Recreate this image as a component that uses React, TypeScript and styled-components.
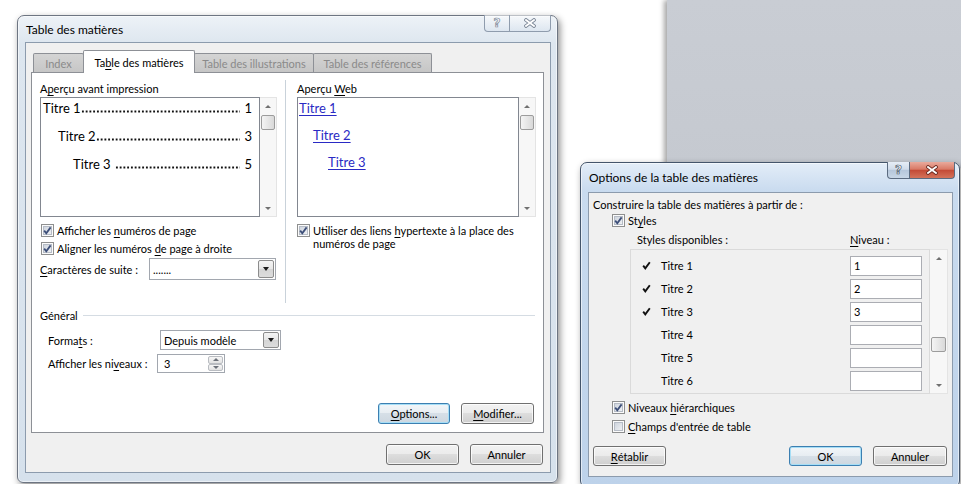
import React from "react";
import styled, { createGlobalStyle } from "styled-components";

const GlobalStyle = createGlobalStyle`
  html, body {
    margin: 0;
    padding: 0;
    overflow: hidden;
    background: #ffffff;
  }
  body {
    font-family: "Lato", "Liberation Sans", sans-serif;
    font-size: 11px;
    color: #000;
  }
  u {
    text-decoration-thickness: 1px;
    text-underline-offset: 2px;
  }
`;

const Desktop = styled.div`
  position: relative;
  width: 961px;
  height: 484px;
  overflow: hidden;
  background: #fff;
`;

// the window lying behind the dialogs, top right
const Backdrop = styled.div`
  position: absolute;
  left: 667px;
  top: 0;
  width: 300px;
  height: 168px;
  background: linear-gradient(180deg, #c9cdd4 0%, #c5c9d0 100%);
  box-shadow: -3px 0 5px rgba(0, 0, 0, 0.35);
`;

const Window = styled.div<{ $x: number; $y: number; $w: number; $h: number; $active?: boolean }>`
  position: absolute;
  left: ${(p) => p.$x}px;
  top: ${(p) => p.$y}px;
  width: ${(p) => p.$w}px;
  height: ${(p) => p.$h}px;
  box-sizing: border-box;
  display: flex;
  flex-direction: column;
  padding: 0 6px 9px 7px;
  border: 1px solid ${(p) => (p.$active ? "#44556b" : "#6d7582")};
  border-radius: 7px 7px 6px 6px;
  background: ${(p) =>
    p.$active
      ? "linear-gradient(180deg, #e3edf8 0px, #c9dbef 28px, #bdd2ea 100%)"
      : "linear-gradient(180deg, #edf2f7 0px, #dde6ef 28px, #d6e1ec 100%)"};
  box-shadow: inset 0 0 0 1px rgba(255, 255, 255, 0.55), 2px 3px 7px rgba(0, 0, 0, 0.45);
`;

const TitleBar = styled.div<{ $h: number }>`
  position: relative;
  height: ${(p) => p.$h}px;
  display: flex;
  align-items: center;
  padding-left: 1px;
  font-size: 12px;
  white-space: nowrap;
`;

const Captions = styled.div<{ $right: number }>`
  position: absolute;
  top: -1px;
  right: ${(p) => p.$right}px;
  display: flex;
  height: 17px;
`;

const CaptionButton = styled.div<{ $w: number; $close?: boolean; $active?: boolean }>`
  width: ${(p) => p.$w}px;
  height: 100%;
  box-sizing: border-box;
  display: flex;
  align-items: center;
  justify-content: center;
  border: 1px solid ${(p) => (p.$active ? "#5b6b80" : "#8f9cad")};
  border-top: none;
  border-left: ${(p) => (p.$close ? "none" : undefined)};
  border-radius: ${(p) => (p.$close ? "0 0 4px 0" : "0 0 0 4px")};
  background: ${(p) =>
    !p.$active
      ? "linear-gradient(180deg, rgba(255,255,255,0.55), rgba(214,225,237,0.5))"
      : p.$close
      ? "linear-gradient(180deg, #e9aa9c 0%, #d97a66 45%, #c44b37 52%, #d4735a 100%)"
      : "linear-gradient(180deg, #e6edf6 0%, #d1dcea 45%, #b6c7db 52%, #c8d7e7 100%)"};
`;

const HelpGlyph = styled.span<{ $active?: boolean }>`
  font-family: "DejaVu Sans", sans-serif;
  font-weight: bold;
  font-size: 12px;
  line-height: 1;
  color: #f6f8fb;
  -webkit-text-stroke: 0.7px ${(p) => (p.$active ? "#4c5868" : "#7d8898")};
`;

const CloseGlyph = ({ active }: { active?: boolean }) => (
  <svg width="12" height="10" viewBox="0 0 12 10">
    <path d="M2 2 L10 8 M10 2 L2 8" stroke={active ? "#6b2a20" : "#7d8898"} strokeWidth="3.6" strokeLinecap="square" fill="none" />
    <path d="M2 2 L10 8 M10 2 L2 8" stroke="#ffffff" strokeWidth="1.8" strokeLinecap="square" fill="none" />
  </svg>
);

const Client = styled.div`
  flex: 1;
  min-height: 0;
  display: flex;
  flex-direction: column;
  background: #f0f0f0;
  border: 1px solid #8c9bad;
`;

/* ---------- tabs ---------- */

const TabArea = styled.div`
  display: flex;
  flex-direction: column;
  padding: 7px 6px 0 5px;
`;

const TabStrip = styled.div`
  position: relative;
  z-index: 1;
  display: flex;
  align-items: flex-end;
  height: 22px;
  padding-left: 2px;
`;

const Tab = styled.div<{ $w: number; $selected?: boolean }>`
  width: ${(p) => p.$w}px;
  height: ${(p) => (p.$selected ? 23 : 19)}px;
  margin-bottom: ${(p) => (p.$selected ? -1 : 0)}px;
  margin-left: -1px;
  box-sizing: border-box;
  border: 1px solid #8d9096;
  border-bottom: none;
  border-radius: 2px 2px 0 0;
  background: ${(p) => (p.$selected ? "#ffffff" : "linear-gradient(180deg, #d4d4d4, #c6c6c6)")};
  color: ${(p) => (p.$selected ? "#000" : "#8a8a8a")};
  display: flex;
  align-items: center;
  justify-content: center;
  white-space: nowrap;

  &:first-child {
    margin-left: 0;
  }
`;

const Panel = styled.div`
  height: 361px;
  box-sizing: border-box;
  display: flex;
  flex-direction: column;
  border: 1px solid #8d9096;
  background: #ffffff;
`;

const PreviewSection = styled.div`
  display: flex;
  height: 230px;
  box-sizing: border-box;
  padding: 8px 0 0 8px;
`;

const Column = styled.div<{ $w: number }>`
  width: ${(p) => p.$w}px;
  display: flex;
  flex-direction: column;
`;

const Divider = styled.div`
  width: 1px;
  margin: -1px 11px 0 8px;
  background: #c9d2da;
`;

const FieldLabel = styled.div`
  height: 15px;
  line-height: 15px;
  white-space: nowrap;
`;

const PreviewFrame = styled.div`
  display: flex;
  height: 120px;
  margin-top: 1px;
`;

const PreviewBox = styled.div<{ $gap: number }>`
  flex: 1;
  min-width: 0;
  box-sizing: border-box;
  display: flex;
  flex-direction: column;
  gap: ${(p) => p.$gap}px;
  padding: 1px 7px 0 0;
  border: 1px solid #828790;
  background: #fff;
  overflow: hidden;
`;

const TocLine = styled.div<{ $indent: number }>`
  display: flex;
  align-items: center;
  height: 18px;
  padding-left: ${(p) => p.$indent}px;
  font-size: 13px;
  white-space: nowrap;
`;

// dotted leader between a title and its page number
const Leader = styled.span<{ $space?: boolean }>`
  flex: 1;
  align-self: flex-end;
  height: 3px;
  margin: 0 0 4px ${(p) => (p.$space ? 4 : 0)}px;
  background-image: radial-gradient(circle at center, #111 0.9px, transparent 1.3px);
  background-size: 3.75px 3px;
  background-repeat: repeat-x;
`;

const PageNum = styled.span`
  padding-left: 4px;
`;

const WebLink = styled.a<{ $indent: number }>`
  display: block;
  height: 18px;
  line-height: 18px;
  margin-left: ${(p) => p.$indent}px;
  font-size: 13px;
  color: #2a2ac4;
  text-decoration: underline;
  text-underline-offset: 2px;
  white-space: nowrap;
  align-self: flex-start;
`;

/* ---------- scroll bars ---------- */

const ScrollTrack = styled.div<{ $w: number }>`
  width: ${(p) => p.$w}px;
  box-sizing: border-box;
  display: flex;
  flex-direction: column;
  border: 1px solid #e4e4e4;
  border-left: none;
  background: #f7f7f7;
`;

const ScrollArrow = styled.span<{ $down?: boolean }>`
  height: 16px;
  display: flex;
  align-items: center;
  justify-content: center;

  &::after {
    content: "";
    border-left: 3px solid transparent;
    border-right: 3px solid transparent;
    ${(p) => (p.$down ? "border-top: 3px solid #707070;" : "border-bottom: 3px solid #707070;")}
  }
`;

const ScrollThumb = styled.span<{ $top: number }>`
  height: 15px;
  margin: ${(p) => p.$top}px 1px 0;
  box-sizing: border-box;
  border: 1px solid #9c9c9c;
  border-radius: 2px;
  background: linear-gradient(90deg, #f4f4f4, #d9d9d9);
`;

const ScrollSpace = styled.span`
  flex: 1;
`;

const ScrollBar = ({ w, thumbTop }: { w: number; thumbTop: number }) => (
  <ScrollTrack $w={w}>
    <ScrollArrow />
    <ScrollThumb $top={thumbTop} />
    <ScrollSpace />
    <ScrollArrow $down />
  </ScrollTrack>
);

/* ---------- checkboxes ---------- */

const CheckRow = styled.div<{ $h?: number; $indent?: number; $top?: boolean; $mt?: number }>`
  display: flex;
  align-items: ${(p) => (p.$top ? "flex-start" : "center")};
  gap: 3px;
  height: ${(p) => (p.$h ? `${p.$h}px` : "auto")};
  margin-top: ${(p) => p.$mt ?? 0}px;
  padding-left: ${(p) => p.$indent ?? 1}px;
  white-space: nowrap;
`;

const BoxOuter = styled.span`
  flex: none;
  width: 13px;
  height: 13px;
  box-sizing: border-box;
  display: flex;
  align-items: center;
  justify-content: center;
  border: 1px solid #8e8f8f;
  background: #fbfbfb;
`;

const BoxInner = styled.span`
  position: relative;
  width: 9px;
  height: 9px;
  box-sizing: border-box;
  border: 1px solid #b6bcc6;
  background: linear-gradient(135deg, #cfd5de 0%, #eef0f3 100%);

  svg {
    position: absolute;
    left: -2px;
    top: -2px;
  }
`;

const CheckText = styled.span`
  line-height: 13px;
`;

const CheckBox = ({ checked }: { checked?: boolean }) => (
  <BoxOuter>
    <BoxInner>
      {checked && (
        <svg width="11" height="11" viewBox="0 0 11 11">
          <path d="M2.2 5.6 L4.3 8.2 L8.6 2.4" stroke="#3d4f79" strokeWidth="1.8" fill="none" />
        </svg>
      )}
    </BoxInner>
  </BoxOuter>
);

/* ---------- inputs ---------- */

const InlineField = styled.div`
  display: flex;
  align-items: center;
  margin-top: 1px;
`;

const InlineLabel = styled.span<{ $w: number }>`
  width: ${(p) => p.$w}px;
  white-space: nowrap;
`;

const Select = styled.div<{ $w: number; $h: number }>`
  width: ${(p) => p.$w}px;
  height: ${(p) => p.$h}px;
  box-sizing: border-box;
  display: flex;
  align-items: center;
  padding-left: 3px;
  border: 1px solid #a2a7af;
  background: #fff;
  white-space: nowrap;
`;

const SelectValue = styled.span`
  flex: 1;
`;

const DropButton = styled.span`
  align-self: stretch;
  width: 16px;
  margin: 1px;
  box-sizing: border-box;
  display: flex;
  align-items: center;
  justify-content: center;
  border: 1px solid #8c8c8c;
  border-radius: 2px;
  background: linear-gradient(180deg, #f4f4f4 0%, #e7e7e7 50%, #d5d5d5 51%, #dcdcdc 100%);

  &::after {
    content: "";
    border-left: 3.5px solid transparent;
    border-right: 3.5px solid transparent;
    border-top: 4px solid #1b1b1b;
  }
`;

const Spin = styled.div`
  width: 68px;
  height: 19px;
  margin-left: -3px;
  box-sizing: border-box;
  display: flex;
  align-items: center;
  padding-left: 6px;
  border: 1px solid #a2a7af;
  background: #fff;
`;

const SpinButtons = styled.span`
  align-self: stretch;
  width: 15px;
  margin: 1px;
  margin-left: auto;
  display: flex;
  flex-direction: column;
`;

const SpinHalf = styled.span<{ $down?: boolean }>`
  flex: 1;
  box-sizing: border-box;
  display: flex;
  align-items: center;
  justify-content: center;
  border: 1px solid #b9bcc1;
  border-radius: 2px;
  background: linear-gradient(180deg, #f6f6f6, #e2e2e2);

  &::after {
    content: "";
    border-left: 3px solid transparent;
    border-right: 3px solid transparent;
    ${(p) => (p.$down ? "border-top: 3px solid #6c717a;" : "border-bottom: 3px solid #6c717a;")}
  }
`;

/* ---------- général ---------- */

const GroupHeader = styled.div`
  display: flex;
  align-items: center;
  height: 15px;
  margin-top: 5px;
  padding: 0 8px;
  white-space: nowrap;
`;

const GroupRule = styled.span`
  flex: 1;
  height: 1px;
  margin-left: 5px;
  background: #d5dce3;
`;

const FormRow = styled.div<{ $mt: number }>`
  display: flex;
  align-items: center;
  margin-top: ${(p) => p.$mt}px;
  padding-left: 16px;
`;

/* ---------- buttons ---------- */

const ButtonRow = styled.div<{ $mt?: string; $pad: string }>`
  display: flex;
  justify-content: flex-end;
  gap: 11px;
  margin-top: ${(p) => p.$mt ?? "0"};
  padding: ${(p) => p.$pad};
`;

const Button = styled.div<{ $w: number; $h?: number; $default?: boolean; $push?: boolean }>`
  width: ${(p) => p.$w}px;
  height: ${(p) => p.$h ?? 21}px;
  box-sizing: border-box;
  display: flex;
  align-items: center;
  justify-content: center;
  margin-right: ${(p) => (p.$push ? "auto" : "0")};
  border: 1px solid ${(p) => (p.$default ? "#3c7fb1" : "#707070")};
  border-radius: 3px;
  background: ${(p) =>
    p.$default
      ? "linear-gradient(180deg, #f2f6f9 0%, #e7edf2 49%, #d6dfe7 50%, #cdd7e0 100%)"
      : "linear-gradient(180deg, #f2f2f2 0%, #ebebeb 49%, #dddddd 50%, #cfcfcf 100%)"};
  box-shadow: inset 0 0 0 1px ${(p) => (p.$default ? "#a6def6" : "rgba(255,255,255,0.75)")};
  white-space: nowrap;
`;

/* ---------- options dialog ---------- */

const OptionsBody = styled.div`
  display: flex;
  flex-direction: column;
  padding: 4px 5px 0 4px;
`;

const Heading = styled.div<{ $indent?: number; $mt?: number }>`
  display: flex;
  height: 15px;
  line-height: 15px;
  margin-top: ${(p) => p.$mt ?? 0}px;
  padding-left: ${(p) => p.$indent ?? 0}px;
  white-space: nowrap;
`;

const HeadingCell = styled.span<{ $w: number }>`
  width: ${(p) => p.$w}px;
`;

const StyleList = styled.div`
  display: flex;
  width: 318px;
  height: 145px;
  margin: 2px 0 0 37px;
`;

const StyleRows = styled.div`
  flex: 1;
  box-sizing: border-box;
  display: flex;
  flex-direction: column;
  padding-top: 4px;
  border: 1px solid #dadada;
`;

const StyleRow = styled.div`
  display: flex;
  align-items: center;
  height: 23px;
`;

const MarkCell = styled.span`
  width: 30px;
  display: flex;
  padding-left: 11px;
  box-sizing: border-box;
`;

const StyleName = styled.span`
  width: 189px;
`;

const LevelInput = styled.span`
  width: 72px;
  height: 20px;
  box-sizing: border-box;
  display: flex;
  align-items: center;
  padding-left: 3px;
  border: 1px solid #abadb3;
  background: #fff;
`;

const Mark = () => (
  <svg width="9" height="9" viewBox="0 0 9 9">
    <path d="M1.2 4.6 L3.3 7.4 L7.8 1.2" stroke="#111" strokeWidth="1.9" fill="none" />
  </svg>
);

const toc = [
  { title: "Titre 1", page: "1", indent: 2, space: false },
  { title: "Titre 2", page: "3", indent: 17, space: false },
  { title: "Titre 3", page: "5", indent: 32, space: true },
];

const web = [
  { title: "Titre 1", indent: 1 },
  { title: "Titre 2", indent: 15 },
  { title: "Titre 3", indent: 30 },
];

const styles = [
  { name: "Titre 1", level: "1" },
  { name: "Titre 2", level: "2" },
  { name: "Titre 3", level: "3" },
  { name: "Titre 4", level: "" },
  { name: "Titre 5", level: "" },
  { name: "Titre 6", level: "" },
];

export default function App() {
  return (
    <>
      <GlobalStyle />
      <Desktop>
        <Backdrop />

        <Window $x={17} $y={15} $w={541} $h={468}>
          <TitleBar $h={26}>
            Table des matières
            <Captions $right={0}>
              <CaptionButton $w={26}>
                <HelpGlyph>?</HelpGlyph>
              </CaptionButton>
              <CaptionButton $w={41} $close>
                <CloseGlyph />
              </CaptionButton>
            </Captions>
          </TitleBar>
          <Client>
            <TabArea>
              <TabStrip>
                <Tab $w={51}>Index</Tab>
                <Tab $w={112} $selected>
                  Ta<u>b</u>le des matières
                </Tab>
                <Tab $w={120}>Table des illustrations</Tab>
                <Tab $w={119}>Table des références</Tab>
              </TabStrip>
              <Panel>
                <PreviewSection>
                  <Column $w={237}>
                    <FieldLabel>
                      A<u>p</u>erçu avant impression
                    </FieldLabel>
                    <PreviewFrame>
                      <PreviewBox $gap={10}>
                        {toc.map((t) => (
                          <TocLine key={t.title} $indent={t.indent}>
                            {t.title}
                            <Leader $space={t.space} />
                            <PageNum>{t.page}</PageNum>
                          </TocLine>
                        ))}
                      </PreviewBox>
                      <ScrollBar w={17} thumbTop={1} />
                    </PreviewFrame>
                    <CheckRow $h={18} $mt={4}>
                      <CheckBox checked />
                      <CheckText>
                        Afficher les <u>n</u>uméros de page
                      </CheckText>
                    </CheckRow>
                    <CheckRow $h={18}>
                      <CheckBox checked />
                      <CheckText>
                        Aligner les numéros <u>d</u>e page à droite
                      </CheckText>
                    </CheckRow>
                    <InlineField>
                      <InlineLabel $w={109}>
                        <u>C</u>aractères de suite :
                      </InlineLabel>
                      <Select $w={127} $h={22}>
                        <SelectValue>.......</SelectValue>
                        <DropButton />
                      </Select>
                    </InlineField>
                  </Column>
                  <Divider />
                  <Column $w={239}>
                    <FieldLabel>
                      Aperçu <u>W</u>eb
                    </FieldLabel>
                    <PreviewFrame>
                      <PreviewBox $gap={9}>
                        {web.map((w) => (
                          <WebLink key={w.title} $indent={w.indent}>
                            {w.title}
                          </WebLink>
                        ))}
                      </PreviewBox>
                      <ScrollBar w={17} thumbTop={1} />
                    </PreviewFrame>
                    <CheckRow $top $mt={7} $indent={0}>
                      <CheckBox checked />
                      <CheckText>
                        Utiliser des liens <u>h</u>ypertexte à la place des
                        <br />
                        numéros de page
                      </CheckText>
                    </CheckRow>
                  </Column>
                </PreviewSection>

                <GroupHeader>
                  Général
                  <GroupRule />
                </GroupHeader>
                <FormRow $mt={7}>
                  <InlineLabel $w={112}>
                    Forma<u>t</u>s :
                  </InlineLabel>
                  <Select $w={121} $h={20}>
                    <SelectValue>Depuis modèle</SelectValue>
                    <DropButton />
                  </Select>
                </FormRow>
                <FormRow $mt={4}>
                  <InlineLabel $w={112}>
                    Afficher les ni<u>v</u>eaux :
                  </InlineLabel>
                  <Spin>
                    3
                    <SpinButtons>
                      <SpinHalf />
                      <SpinHalf $down />
                    </SpinButtons>
                  </Spin>
                </FormRow>

                <ButtonRow $mt="auto" $pad="0 9px 8px 0">
                  <Button $w={72} $default>
                    <u>O</u>ptions...
                  </Button>
                  <Button $w={73}>
                    <u>M</u>odifier...
                  </Button>
                </ButtonRow>
              </Panel>
            </TabArea>
            <ButtonRow $mt="11px" $pad="0 7px 0 0">
              <Button $w={73}>OK</Button>
              <Button $w={73}>Annuler</Button>
            </ButtonRow>
          </Client>
        </Window>

        <Window $x={580} $y={162} $w={380} $h={325} $active>
          <TitleBar $h={29}>
            Options de la table des matières
            <Captions $right={-2}>
              <CaptionButton $w={23} $active>
                <HelpGlyph $active>?</HelpGlyph>
              </CaptionButton>
              <CaptionButton $w={45} $close $active>
                <CloseGlyph active />
              </CaptionButton>
            </Captions>
          </TitleBar>
          <Client>
            <OptionsBody>
              <Heading>Construire la table des matières à partir de :</Heading>
              <CheckRow $h={17} $indent={19}>
                <CheckBox checked />
                <CheckText>
                  St<u>y</u>les
                </CheckText>
              </CheckRow>
              <Heading $indent={44} $mt={3}>
                <HeadingCell $w={213}>Styles disponibles :</HeadingCell>
                <span>
                  <u>N</u>iveau :
                </span>
              </Heading>
              <StyleList>
                <StyleRows>
                  {styles.map((s) => (
                    <StyleRow key={s.name}>
                      <MarkCell>{s.level && <Mark />}</MarkCell>
                      <StyleName>{s.name}</StyleName>
                      <LevelInput>{s.level}</LevelInput>
                    </StyleRow>
                  ))}
                </StyleRows>
                <ScrollBar w={18} thumbTop={71} />
              </StyleList>
              <CheckRow $h={19} $indent={19} $mt={4}>
                <CheckBox checked />
                <CheckText>
                  Niveaux <u>h</u>iérarchiques
                </CheckText>
              </CheckRow>
              <CheckRow $h={19} $indent={19}>
                <CheckBox />
                <CheckText>
                  <u>C</u>hamps d'entrée de table
                </CheckText>
              </CheckRow>
              <ButtonRow $mt="10px" $pad="0">
                <Button $w={73} $h={20} $push>
                  <u>R</u>établir
                </Button>
                <Button $w={73} $h={20} $default>
                  OK
                </Button>
                <Button $w={74} $h={20}>
                  Annuler
                </Button>
              </ButtonRow>
            </OptionsBody>
          </Client>
        </Window>
      </Desktop>
    </>
  );
}
